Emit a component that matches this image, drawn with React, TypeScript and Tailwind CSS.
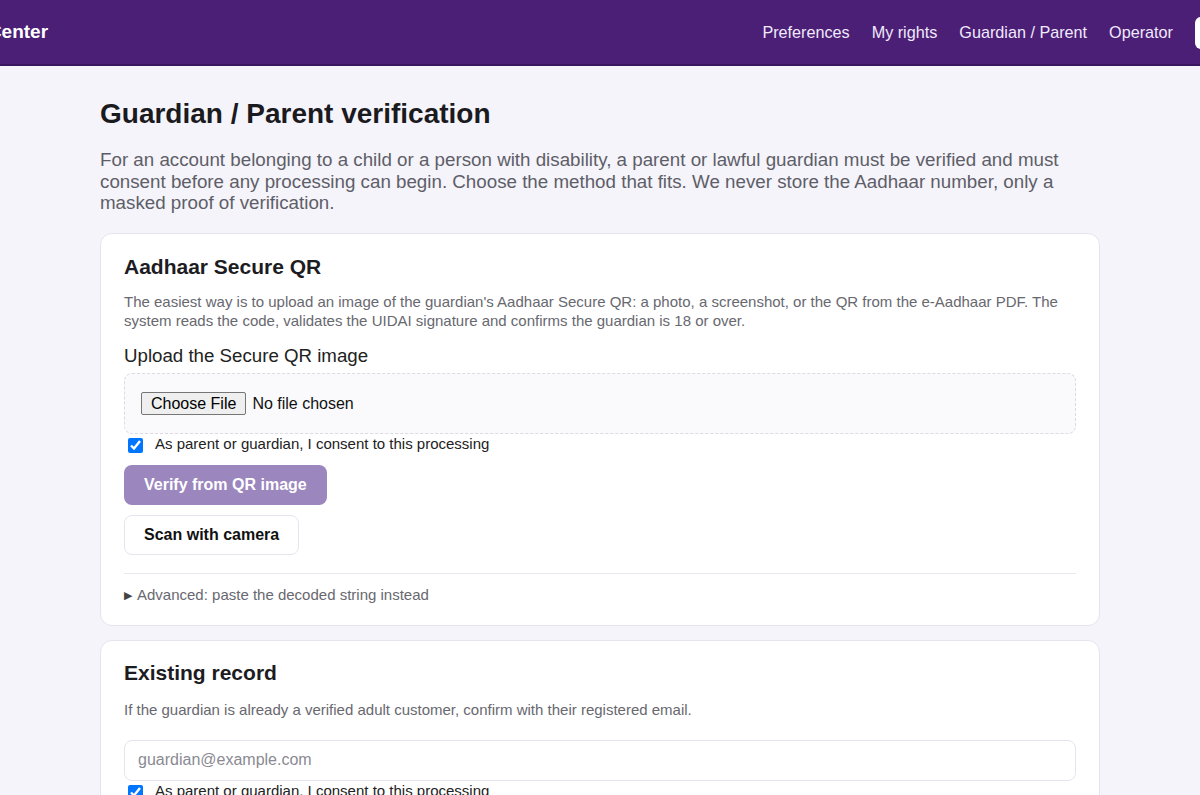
import { useState } from "react";

const NAV = ["Preferences", "My rights", "Guardian / Parent", "Operator"];

function Consent({ checked, onChange }: { checked: boolean; onChange: (v: boolean) => void }) {
  return (
    <label className="flex items-center gap-[12px] pl-[4px] text-[15px] leading-[20px] text-[#222]">
      <input
        type="checkbox"
        checked={checked}
        onChange={(e) => onChange(e.target.checked)}
        className="mt-[3px] h-[15px] w-[15px] shrink-0"
      />
      <span>As parent or guardian, I consent to this processing</span>
    </label>
  );
}

export default function App() {
  const [qrConsent, setQrConsent] = useState(true);
  const [recordConsent, setRecordConsent] = useState(true);
  const [email, setEmail] = useState("");

  return (
    <div className="min-h-screen bg-[#f5f4fa] font-['Liberation_Sans',Arial,sans-serif] text-[#1c1c22]">
      <header className="flex h-[66px] items-center overflow-hidden border-b-2 border-[#3a165e] bg-[#4a1f75] pt-[1px]">
        <span className="-ml-[85px] shrink-0 text-[19px] font-bold text-white">Privacy Center</span>
        <nav className="ml-auto flex shrink-0 gap-[22px] text-[16.2px] text-[#f1e9fc]">
          {NAV.map((n) => (
            <a key={n} href="#" className="whitespace-nowrap">
              {n}
            </a>
          ))}
        </nav>
        <button
          type="button"
          className="-mr-[75px] ml-[22px] h-[32px] w-[80px] shrink-0 rounded-md bg-white text-[14px] font-bold text-[#4a1f75]"
        >
          Sign out
        </button>
      </header>

      <main className="mx-auto max-w-[1000px] pb-10 pt-[31px]">
        <h1 className="text-[28px] font-bold leading-[34px] text-[#1a1a1f]">Guardian / Parent verification</h1>
        <p className="mb-[19px] mt-[18px] text-[18.75px] leading-[21.5px] text-[#5e5e68]">
          For an account belonging to a child or a person with disability, a parent or lawful guardian must be verified
          and must consent before any processing can begin. Choose the method that fits. We never store the Aadhaar
          number, only a masked proof of verification.
        </p>

        <section className="rounded-xl border border-[#e6e4ee] bg-white px-[23px] pb-[20px] pt-[21px]">
          <h2 className="text-[21px] font-bold leading-[24px]">Aadhaar Secure QR</h2>
          <p className="mt-[13px] text-[15px] leading-[19px] text-[#68686f]">
            The easiest way is to upload an image of the guardian's Aadhaar Secure QR: a photo, a screenshot, or the QR
            from the e-Aadhaar PDF. The system reads the code, validates the UIDAI signature and confirms the guardian is
            18 or over.
          </p>
          <div className="mt-[15px] text-[18.7px] leading-[22px] text-[#222]">Upload the Secure QR image</div>
          <div className="mt-[6px] flex h-[61px] items-center rounded-lg border border-dashed border-[#dcdae4] bg-[#fafafc] px-4">
            <input
              type="file"
              accept="image/*"
              className="text-[16px] leading-[19px] text-[#111] file:mr-[6px] file:rounded-[2px] file:border file:border-solid file:border-[#767676] file:bg-[#efefef] file:px-[9px] file:py-[1px] file:text-[16px] file:text-black"
            />
          </div>
          <Consent checked={qrConsent} onChange={setQrConsent} />
          <div className="mt-[11px] flex flex-col items-start gap-[10px]">
            <button
              type="button"
              disabled
              className="h-[40px] rounded-lg bg-[#9b86be] px-[20px] text-[16px] font-bold text-white"
            >
              Verify from QR image
            </button>
            <button
              type="button"
              className="h-[40px] rounded-lg border border-[#e6e4ee] bg-white px-[19px] text-[16px] font-bold text-[#111]"
            >
              Scan with camera
            </button>
          </div>
          <details className="mt-[18px] border-t border-[#e8e6ee] pt-[11px] text-[15px] leading-[20px] text-[#68686f]">
            <summary className="flex cursor-pointer list-none items-center [&::-webkit-details-marker]:hidden">
              <span className="mr-[5px] text-[11px] leading-[20px] text-[#444]">▶</span>
              Advanced: paste the decoded string instead
            </summary>
            <textarea className="mt-2 h-24 w-full rounded-lg border border-[#e6e4ee] p-2 text-[14px]" />
          </details>
        </section>

        <section className="mt-[14px] rounded-xl border border-[#e6e4ee] bg-white px-[23px] pb-6 pt-[20px]">
          <h2 className="text-[21px] font-bold leading-[24px]">Existing record</h2>
          <p className="mt-[15px] text-[15px] leading-[19px] text-[#68686f]">
            If the guardian is already a verified adult customer, confirm with their registered email.
          </p>
          <input
            type="email"
            value={email}
            onChange={(e) => setEmail(e.target.value)}
            placeholder="guardian@example.com"
            className="mt-[21px] h-[41px] w-full rounded-lg border border-[#e6e4ee] bg-white px-[13px] text-[16px] text-[#222] placeholder:text-[#8a8a92] focus:outline-none"
          />
          <Consent checked={recordConsent} onChange={setRecordConsent} />
          <button
            type="button"
            className="mt-[11px] h-[40px] rounded-lg bg-[#4a1f75] px-[18px] text-[16px] font-bold text-white"
          >
            Confirm guardian
          </button>
        </section>
      </main>
    </div>
  );
}
